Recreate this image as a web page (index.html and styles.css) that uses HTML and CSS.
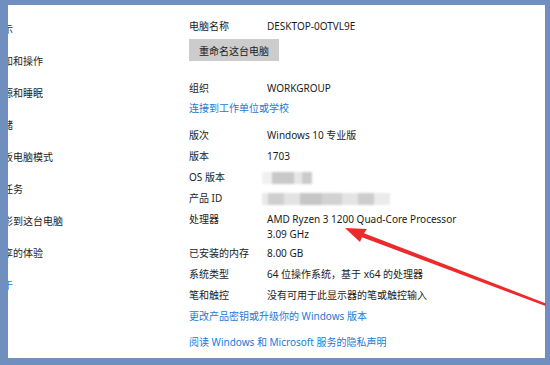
FILE: index.html
```html
<!DOCTYPE html>
<html lang="zh-CN">
<head>
<meta charset="UTF-8">
<title>关于</title>
<link rel="stylesheet" href="styles.css">
</head>
<body>
<div class="frame">
<div class="window">
<div class="nav">
<ul class="navList">
<li>显示</li>
<li>通知和操作</li>
<li>电源和睡眠</li>
<li>存储</li>
<li>平板电脑模式</li>
<li>多任务</li>
<li>投影到这台电脑</li>
<li>共享的体验</li>
<li class="navLink">关于</li>
</ul>
</div>
<div class="main">
<div class="row first"><span class="label">电脑名称</span><span class="value">DESKTOP-0OTVL9E</span></div>
<button class="renameBtn">重命名这台电脑</button>
<div class="row org"><span class="label">组织</span><span class="value">WORKGROUP</span></div>
<a class="link connect" href="#">连接到工作单位或学校</a>
<div class="specs">
<div class="row"><span class="label">版次</span><span class="value">Windows 10 专业版</span></div>
<div class="row"><span class="label">版本</span><span class="value">1703</span></div>
<div class="row"><span class="label">OS 版本</span><span class="value"><span class="blur blurShort"></span></span></div>
<div class="row"><span class="label">产品 ID</span><span class="value"><span class="blur blurLong"></span></span></div>
<div class="row cpu"><span class="label">处理器</span><span class="value">AMD Ryzen 3 1200 Quad-Core Processor<br>3.09 GHz</span></div>
<div class="row"><span class="label">已安装的内存</span><span class="value">8.00 GB</span></div>
<div class="row"><span class="label">系统类型</span><span class="value">64 位操作系统，基于 x64 的处理器</span></div>
<div class="row"><span class="label">笔和触控</span><span class="value">没有可用于此显示器的笔或触控输入</span></div>
<a class="link" href="#">更改产品密钥或升级你的 Windows 版本</a>
</div>
<a class="link privacy" href="#">阅读 Windows 和 Microsoft 服务的隐私声明</a>
</div>
</div>
<!-- red annotation arrow -->
<svg class="arrow" width="550" height="365" viewBox="0 0 550 365">
<polygon fill="#ec2a2c" points="345,228 367,229 364,233.2 546,303.5 545.5,306 362,237.2 360,242"/>
</svg>
</div>
</body>
</html>
```

FILE: styles.css
```css
* {
margin: 0;
padding: 0;
box-sizing: border-box;
}
body {
width: 550px;
height: 365px;
overflow: hidden;
font-family: "Noto Sans", "Noto Sans CJK SC", sans-serif;
font-size: 10px;
color: #1c1c1c;
}
.frame {
position: relative;
width: 550px;
height: 365px;
background-color: #6f90bf;
padding: 5px 5px 7px 8px;
}
.window {
display: flex;
height: 100%;
background-color: #fff;
}
.nav {
width: 181px;
overflow: hidden;
flex-shrink: 0;
}
.navList {
list-style: none;
margin-left: -15px;
padding-top: 17px;
display: flex;
flex-direction: column;
gap: 17px;
white-space: nowrap;
}
.navList li {
line-height: 15px;
}
.navLink {
color: #1c7ad8;
}
.main {
display: flex;
flex-direction: column;
align-items: flex-start;
padding-top: 14px;
}
.row {
display: flex;
line-height: 15px;
}
.label {
width: 78px;
flex-shrink: 0;
}
.renameBtn {
margin-top: 5px;
height: 22px;
padding: 0 10px;
border: 0;
background-color: #cccccc;
font: inherit;
color: #1c1c1c;
}
.org {
margin-top: 20px;
}
.link {
color: #1c7ad8;
text-decoration: none;
line-height: 15px;
}
.connect {
margin-top: 5px;
}
.specs {
margin-top: 12px;
display: flex;
flex-direction: column;
gap: 6px;
}
.cpu {
margin-bottom: -2px;
}
.privacy {
margin-top: 11px;
}
.blur {
display: block;
height: 12px;
margin-top: 2px;
margin-left: -5px;
filter: blur(1.2px);
}
.blurShort {
width: 50px;
background: linear-gradient(to right, #f0f0f0 0 10px, #c9c9c9 10px 32px, #e6e6e6 32px 40px, #cbcbcb 40px 50px);
}
.blurLong {
width: 128px;
background: linear-gradient(to right, #e9e9e9 0 6px, #cfcfcf 6px 22px, #e3e3e3 22px 38px, #c6c6c6 38px 60px, #d2d2d2 60px 80px, #e4e4e4 80px 96px, #cdcdcd 96px 112px, #ebebeb 112px 128px);
}
.arrow {
position: absolute;
left: 0;
top: 0;
pointer-events: none;
}
```
